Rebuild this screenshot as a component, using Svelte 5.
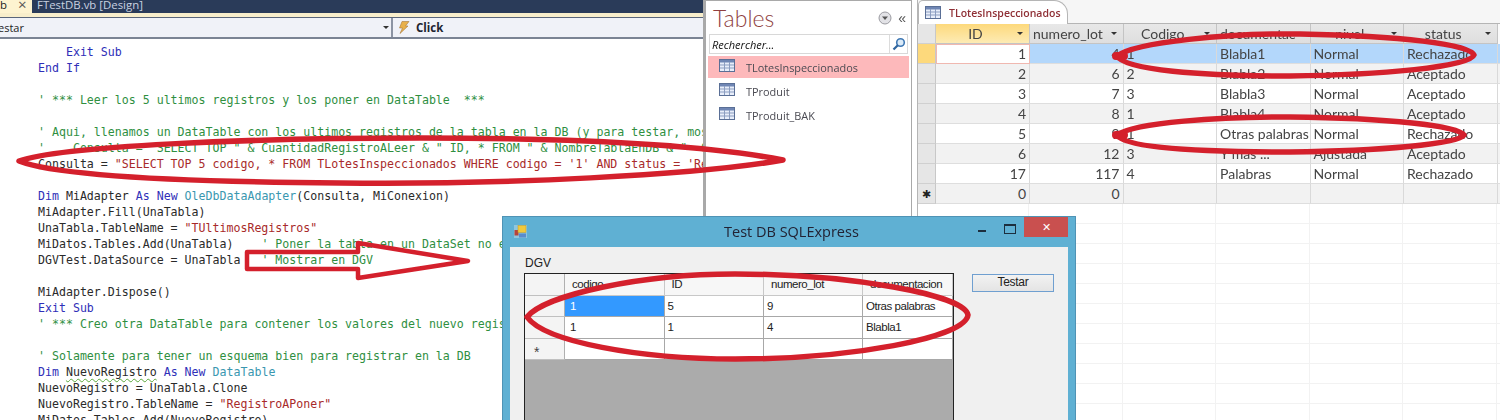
<script>
  const K = "kw", C = "cm", S = "st", T = "ty", P = "";

  const codeLines = [
    [[P, "    MiConexion.Dispose()"]],
    [[K, "    Exit Sub"]],
    [[K, "End If"]],
    [],
    [[C, "' *** Leer los 5 ultimos registros y los poner en DataTable  ***"]],
    [],
    [[C, "' Aqui, llenamos un DataTable con los ultimos registros de la tabla en la DB (y para testar, mostrar en DGV)"]],
    [[C, "'    Consulta = \"SELECT TOP \" & CuantidadRegistroALeer & \" ID, * FROM \" & NombreTablaEnDB & \"  ORDER BY ID DESC\""]],
    [[P, "Consulta = "], [S, "\"SELECT TOP 5 codigo, * FROM TLotesInspeccionados WHERE codigo = '1' AND status = 'Rechazado'\""]],
    [],
    [[K, "Dim"], [P, " MiAdapter "], [K, "As New"], [P, " "], [T, "OleDbDataAdapter"], [P, "(Consulta, MiConexion)"]],
    [[P, "MiAdapter.Fill(UnaTabla)"]],
    [[P, "UnaTabla.TableName = "], [S, "\"TUltimosRegistros\""]],
    [[P, "MiDatos.Tables.Add(UnaTabla)    "], [C, "' Poner la tabla en un DataSet no es necesario"]],
    [[P, "DGVTest.DataSource = UnaTabla   "], [C, "' Mostrar en DGV"]],
    [],
    [[P, "MiAdapter.Dispose()"]],
    [[K, "Exit Sub"]],
    [[C, "' *** Creo otra DataTable para contener los valores del nuevo registro ***"]],
    [],
    [[C, "' Solamente para tener un esquema bien para registrar en la DB"]],
    [[K, "Dim"], [P, " "], ["squiggle", "NuevoRegistro"], [P, " "], [K, "As New"], [P, " "], [T, "DataTable"]],
    [[P, "NuevoRegistro = UnaTabla.Clone"]],
    [[P, "NuevoRegistro.TableName = "], [S, "\"RegistroAPoner\""]],
    [[P, "MiDatos.Tables.Add(NuevoRegistro)"]],
  ];

  const navTables = ["TLotesInspeccionados", "TProduit", "TProduit_BAK"];

  const columns = ["ID", "numero_lot", "Codigo", "documentacion", "nivel", "status"];
  const rows = [
    [1, 4, 1, "Blabla1", "Normal", "Rechazado"],
    [2, 6, 2, "Blabla2", "Normal", "Aceptado"],
    [3, 7, 3, "Blabla3", "Normal", "Aceptado"],
    [4, 8, 1, "Blabla4", "Normal", "Aceptado"],
    [5, 9, 1, "Otras palabras", "Normal", "Rechazado"],
    [6, 12, 3, "Y mas ...", "Ajustada", "Aceptado"],
    [17, 117, 4, "Palabras", "Normal", "Rechazado"],
    [0, 0, "", "", "", ""],
  ];

  const dgvCols = ["codigo", "ID", "numero_lot", "documentacion"];
  const dgvRows = [
    ["1", "5", "9", "Otras palabras"],
    ["1", "1", "4", "Blabla1"],
    ["", "", "", ""],
  ];
</script>

{#snippet tableIcon()}
  <svg class="tbl-icon" viewBox="0 0 16 13" width="16" height="13">
    <rect x="0.5" y="0.5" width="15" height="12" fill="#e8eefa" stroke="#5a6f96" />
    <rect x="1" y="1" width="14" height="2.5" fill="#6f86b4" />
    <path d="M1 6h14M1 9h14M5.5 3v9M10.5 3v9" stroke="#8b9dc0" fill="none" />
  </svg>
{/snippet}

<div class="page">
  <section class="editor">
    <div class="tabs">
      <div class="tab-active">b<span class="tab-x">×</span></div>
      <div class="tab-other">FTestDB.vb [Design]</div>
    </div>
    <div class="cream"></div>
    <div class="combos">
      <div class="combo-left">
        <span>estar</span>
        <i class="caret"></i>
      </div>
      <div class="combo-right">
        <svg viewBox="0 0 12 13" width="12" height="13">
          <path d="M4 0.5h7L7.5 5H10L2 12.5 4.5 7H1.5z" fill="#e8b04a" stroke="#a8793a" stroke-width="0.6" />
        </svg>
        <b>Click</b>
      </div>
    </div>
    <div class="code">
      {#each codeLines as line}
        <div class="line">{#each line as [cls, text]}<span class={cls}>{text}</span>{/each}</div>
      {/each}
    </div>
  </section>

  <aside class="nav">
    <div class="nav-head">
      <span class="nav-title">Tables</span>
      <div class="nav-tools">
        <svg viewBox="0 0 14 14" width="14" height="14">
          <circle cx="7" cy="7" r="6" fill="#e2e2e6" stroke="#9a9aa0" />
          <path d="M4 5.5h6L7 9z" fill="#555" />
        </svg>
        <span class="chev">«</span>
      </div>
    </div>
    <div class="search">
      <span>Rechercher...</span>
      <div class="search-btn">
        <svg viewBox="0 0 14 14" width="14" height="14">
          <circle cx="8.5" cy="5.5" r="3.8" fill="#dcebf8" stroke="#3f78b4" stroke-width="1.6" />
          <path d="M5.8 8.2L1.5 12.5" stroke="#2f659e" stroke-width="2.2" />
        </svg>
      </div>
    </div>
    <ul class="nav-list">
      {#each navTables as name, i}
        <li class:on={i === 0}>{@render tableIcon()}<span>{name}</span></li>
      {/each}
    </ul>
  </aside>

  <section class="sheet">
    <div class="sheet-tabs">
      <div class="sheet-tab">{@render tableIcon()}<span>TLotesInspeccionados</span></div>
    </div>
    <div class="grid-row head">
      <div class="sel corner"></div>
      {#each columns as col, i}
        <div class="hcell" class:active={i === 0}>
          <span class:left={i === 1 || i === 3}>{col}</span>
          <i class="caret"></i>
        </div>
      {/each}
      <div class="hfill"></div>
    </div>
    {#each rows as row, r}
      <div class="grid-row" class:alt={r % 2 === 1} class:current={r === 0}>
        <div class="sel" class:sel-on={r === 0}>{r === 7 ? "✱" : ""}</div>
        {#each row as val, c}
          <div class="cell" class:num={c < 2} class:idcell={r === 0 && c === 0}>{val}</div>
        {/each}
        <div class="cell fill"></div>
      </div>
    {/each}
    <div class="empty"></div>
  </section>

  <div class="form">
    <div class="titlebar">
      <svg class="form-icon" viewBox="0 0 13 13" width="13" height="13">
        <rect x="0" y="0" width="13" height="13" fill="#8fc6de" />
        <rect x="0.5" y="5" width="4" height="5.5" fill="#b5443c" />
        <rect x="4" y="0.5" width="8" height="7" fill="#f0c93c" stroke="#c49a20" stroke-width="0.5" />
        <rect x="5" y="8.5" width="7" height="4" fill="#5a8ccc" />
      </svg>
      <span class="form-title">Test DB SQLExpress</span>
      <div class="winbtns">
        <i class="min"></i>
        <i class="max"></i>
        <div class="close">✕</div>
      </div>
    </div>
    <div class="client">
      <div class="dgv-label">DGV</div>
      <div class="client-row">
        <div class="dgv">
          <div class="dgv-row dgv-head">
            <div class="rh"></div>
            {#each dgvCols as col}<div class="dc">{col}</div>{/each}
          </div>
          {#each dgvRows as row, r}
            <div class="dgv-row">
              <div class="rh">{r === 2 ? "*" : ""}</div>
              {#each row as val, c}<div class="dc" class:first={c === 0} class:picked={r === 0 && c === 0}>{val}</div>{/each}
            </div>
          {/each}
          <div class="dgv-empty"></div>
        </div>
        <div class="testar">Testar</div>
      </div>
    </div>
  </div>

  <svg class="marks" viewBox="0 0 1500 420" width="1500" height="420">
    <g fill="none" stroke="#d4202c" stroke-width="5.5" stroke-linejoin="round" stroke-linecap="round">
      <path d="M19 161C60 146 250 138 420 138C560 138 700 144 783 160C700 175 500 185 340 183C200 182 60 177 19 161Z" />
      <path d="M1117 56C1135 42 1230 33 1300 34C1400 36 1470 44 1474 55C1470 67 1380 75 1290 76C1200 76 1125 70 1117 56Z" />
      <path d="M1116 56L1124 56" stroke-width="8" />
      <path d="M1117 135C1135 122 1220 117 1290 117C1390 118 1458 126 1464 135C1458 144 1380 151 1290 152C1200 152 1125 148 1117 135Z" />
      <path d="M1116 135L1124 135" stroke-width="8" />
      <path d="M527 317C545 295 640 274 735 274C850 274 965 295 968 315C965 338 850 359 735 359C640 359 545 342 527 317Z" />
      <path d="M358 243L468 261L358 278V269H247V252H358Z" stroke-width="4.5" stroke-linecap="butt" />
    </g>
  </svg>
</div>

<style>
  :global(body) {
    background: #fff;
  }

  .page {
    width: 1500px;
    height: 420px;
    overflow: hidden;
    position: relative;
    display: grid;
    grid-template-columns: 703px 214px 1fr;
    filter: blur(0.35px);
    font-family: "Open Sans", "Liberation Sans", sans-serif;
  }

  .editor {
    display: flex;
    flex-direction: column;
    overflow: hidden;
    background: #fff;
  }

  .tabs {
    height: 13px;
    flex: none;
    display: flex;
    background: #2a3b59;
    overflow: hidden;
    font-size: 11.4px;
    line-height: 9px;
  }

  .tab-active {
    width: 32px;
    background: #fdf3d0;
    color: #222;
    display: flex;
    gap: 11px;
  }

  .tab-x {
    font-size: 15px;
    color: #555;
  }

  .tab-other {
    margin-left: 5px;
    color: #c9d1e0;
  }

  .cream {
    height: 4px;
    flex: none;
    background: #f8eecb;
    border-bottom: 1px solid #59657a;
    box-sizing: content-box;
  }

  .combos {
    height: 19px;
    flex: none;
    display: flex;
    background: #f0f2f8;
    border-bottom: 2px solid #7b8494;
    font-size: 11px;
    position: relative;
    z-index: 1;
  }

  .combo-left {
    width: 393px;
    display: flex;
    align-items: center;
    justify-content: space-between;
    padding-right: 2px;
    box-sizing: border-box;
    border-right: 2px solid #8c94a3;
    color: #222;
    margin-right: 5px;
  }

  .combo-left span {
    margin-left: -2px;
  }

  .caret {
    display: block;
    width: 0;
    height: 0;
    border-left: 3px solid transparent;
    border-right: 3px solid transparent;
    border-top: 3px solid #333;
  }

  .combo-right {
    display: flex;
    align-items: center;
    gap: 6px;
    color: #1d2430;
    font-size: 11.5px;
  }

  .code {
    margin-top: -11px;
    padding-left: 38px;
    font-family: "DejaVu Sans Mono", "Liberation Mono", monospace;
    font-size: 11.6px;
    line-height: 16px;
    color: #2a2a2a;
    white-space: pre;
  }

  .line {
    height: 16px;
  }

  /* only the descenders of this line peek out under the combo bar */
  .line:first-child {
    line-height: 8px;
  }

  .kw {
    color: #2f2fb8;
  }

  .cm {
    color: #2f8f3f;
  }

  .st {
    color: #a82a2a;
  }

  .ty {
    color: #3a97b0;
  }

  .squiggle {
    text-decoration: underline wavy #5aa83a 1px;
    text-underline-offset: 2px;
  }

  .nav {
    background: #fff;
    border-left: 3px solid #a9a9a9;
    border-right: 1px solid #a9a9a9;
    border-top: 1px solid #a9a9a9;
    box-sizing: border-box;
    margin-right: 5px;
    padding: 0 2px;
    position: relative;
    z-index: 1;
  }

  .nav-head {
    height: 33px;
    display: flex;
    align-items: center;
    justify-content: space-between;
    padding: 0 3px 0 5px;
  }

  .nav-title {
    font-family: Lato, "Open Sans", sans-serif;
    font-size: 23px;
    font-weight: 300;
    color: #8f3f3f;
  }

  .nav-tools {
    display: flex;
    align-items: center;
    gap: 6px;
  }

  .chev {
    font-size: 14px;
    line-height: 14px;
    color: #555;
    font-family: "Liberation Sans", sans-serif;
  }

  .search {
    height: 18px;
    margin: 0 1px;
    border: 1px solid #d8d8d8;
    display: flex;
    justify-content: space-between;
    align-items: center;
    font-size: 11px;
    font-style: italic;
    color: #111;
    padding-left: 2px;
  }

  .search-btn {
    width: 17px;
    height: 100%;
    display: flex;
    align-items: center;
    justify-content: center;
    border-left: 1px solid #dcdcdc;
  }

  .nav-list {
    list-style: none;
    margin: 2px 0 0;
    padding: 0;
    font-size: 10.9px;
    color: #4a4a52;
  }

  .nav-list li {
    height: 22px;
    margin-bottom: 2px;
    display: flex;
    align-items: center;
    gap: 11px;
    padding-left: 11px;
  }

  .nav-list li.on {
    background: #fdb9bb;
  }

  .tbl-icon {
    flex: none;
    margin-top: -4px;
  }

  .sheet {
    display: flex;
    flex-direction: column;
    border-left: 1px solid #b5b5b5;
    font-family: Lato, "Liberation Sans", sans-serif;
    font-size: 14px;
    color: #444;
  }

  .sheet-tabs {
    height: 24px;
    flex: none;
    background: #f6f6f6;
    border-bottom: 1px solid #b5b5b5;
    box-sizing: border-box;
  }

  .sheet-tab {
    width: 150px;
    height: 24px;
    box-sizing: border-box;
    background: #fff;
    border: 1px solid #b5b5b5;
    border-bottom: none;
    border-radius: 5px 14px 0 0;
    display: flex;
    align-items: center;
    gap: 8px;
    padding-left: 6px;
    font-family: "Open Sans", "Liberation Sans", sans-serif;
    font-size: 10.5px;
    font-weight: 600;
    color: #8f2f35;
  }

  .sheet-tab .tbl-icon {
    margin-top: 0;
  }

  .grid-row {
    height: 20px;
    flex: none;
    display: grid;
    grid-template-columns: 18px 94px repeat(5, 93.5px) 1fr;
    background: #fff;
  }

  .grid-row.alt {
    background: #f2f2f2;
  }

  .grid-row.current {
    background: #b3d7fb;
  }

  .grid-row.head {
    background: #e2e2e2;
  }

  .sel {
    background: #e6e6e6;
    border-right: 1px solid #c8c8c8;
    border-bottom: 1px solid #d0d0d0;
    box-sizing: border-box;
    font-size: 11px;
    line-height: 19px;
    text-align: center;
    color: #222;
  }

  .sel-on {
    background: #fdd97c;
  }

  .hcell {
    display: flex;
    align-items: center;
    justify-content: flex-end;
    position: relative;
    padding-right: 6px;
    border-right: 1px solid #c4c4c4;
    border-bottom: 1px solid #c4c4c4;
    box-sizing: border-box;
    background: linear-gradient(#e8e8e8, #dedede);
  }

  .hcell span {
    position: absolute;
    left: 0;
    right: 14px;
    text-align: center;
    overflow: hidden;
    white-space: nowrap;
  }

  .hcell span.left {
    text-align: left;
    padding-left: 3px;
  }

  .hcell.active {
    background: linear-gradient(#fdd97c, #fdebb4);
  }

  .hfill {
    background: #fafafa;
  }

  .cell {
    padding: 0 3px;
    line-height: 20px;
    border-right: 1px solid #d9d9d9;
    border-bottom: 1px solid #dedede;
    box-sizing: border-box;
    white-space: nowrap;
    overflow: hidden;
  }

  .cell.num {
    text-align: right;
  }

  .cell.fill {
    border-right: none;
  }

  .idcell {
    background: #fff;
    outline: 1px solid #f0b8b0;
    outline-offset: -1px;
  }

  .empty {
    flex: 1;
    margin-left: 18px;
    background-image:
      repeating-linear-gradient(to bottom, transparent 0 19px, #f2f2f2 19px 20px),
      repeating-linear-gradient(to right, transparent 0 92.5px, #f2f2f2 92.5px 93.5px);
  }

  .form {
    position: absolute;
    left: 503px;
    top: 217px;
    width: 572px;
    height: 210px;
    background: #5fb0d3;
    box-shadow: 0 0 0 1px #4f93b5;
    display: flex;
    flex-direction: column;
    box-sizing: border-box;
    padding: 0 7px;
    z-index: 2;
    font-family: "Liberation Sans", sans-serif;
  }

  .titlebar {
    height: 30px;
    flex: none;
    display: flex;
    align-items: flex-start;
    position: relative;
    margin: 0 -7px;
    padding-left: 11px;
  }

  .form-icon {
    margin-top: 8px;
  }

  .form-title {
    position: absolute;
    left: 221px;
    top: 5px;
    font-family: "Open Sans", sans-serif;
    font-size: 14.5px;
    color: #223;
  }

  .winbtns {
    margin-left: auto;
    margin-right: 7px;
    display: flex;
    align-items: flex-start;
  }

  .min {
    display: block;
    width: 8px;
    height: 2px;
    background: #1c2e3e;
    margin: 13px 18px 0 0;
  }

  .max {
    display: block;
    width: 10px;
    height: 7px;
    border: 1px solid #1c2e3e;
    border-top-width: 2px;
    margin: 7px 8px 0 0;
    box-sizing: content-box;
  }

  .close {
    width: 44px;
    height: 20px;
    background: #c9504f;
    color: #fff;
    text-align: center;
    font-size: 11px;
    line-height: 20px;
  }

  .client {
    flex: 1;
    background: #f0f0f0;
    padding: 8px 14px 0 14px;
    font-size: 12px;
    color: #222;
  }

  .dgv-label {
    margin-left: 1px;
    height: 18px;
    line-height: 16px;
  }

  .client-row {
    display: flex;
    align-items: flex-start;
    gap: 18px;
  }

  .dgv {
    width: 430px;
    height: 160px;
    box-sizing: border-box;
    border: 1px solid #222;
    background: #ababab;
    display: flex;
    flex-direction: column;
    font-size: 11.5px;
    letter-spacing: -0.45px;
  }

  .dgv-row {
    height: 21.5px;
    flex: none;
    display: grid;
    grid-template-columns: 40px 99.5px 99.5px 99px 1fr;
    grid-template-rows: 21.5px;
    background: #fff;
  }

  .dgv-head {
    background: #f7f7f7;
  }

  .rh {
    background: #f4f4f4;
    border-right: 1px solid #b0b0b0;
    border-bottom: 1px solid #c0c0c0;
    box-sizing: border-box;
    overflow: hidden;
    padding-right: 16px;
    text-align: center;
    font-size: 14px;
    line-height: 26px;
    color: #444;
  }

  .dc {
    padding-left: 3px;
    border-right: 1px solid #a8a8a8;
    border-bottom: 1px solid #a8a8a8;
    box-sizing: border-box;
    line-height: 21px;
    overflow: hidden;
    white-space: nowrap;
  }

  .dgv-head .dc {
    padding-left: 7px;
    border-color: #c8c8c8;
  }

  .dc.first {
    padding-left: 5px;
  }

  .picked {
    background: #3399ff;
    color: #fff;
  }

  .testar {
    width: 82px;
    height: 18px;
    margin-top: 1px;
    box-sizing: border-box;
    border: 1px solid #6f9fd0;
    background: linear-gradient(#f2f2f2, #e4e4e4);
    text-align: center;
    font-size: 12px;
    line-height: 15px;
    letter-spacing: -0.3px;
    flex: none;
  }

  .marks {
    position: absolute;
    left: 0;
    top: 0;
    z-index: 3;
    pointer-events: none;
  }
</style>
